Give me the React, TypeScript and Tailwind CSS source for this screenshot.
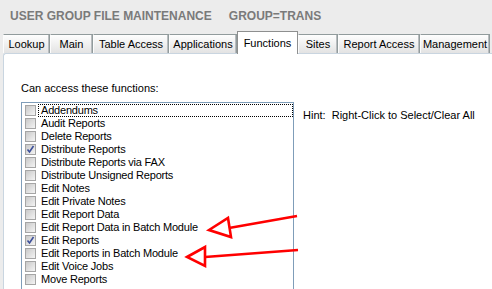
import React from "react";

const tabs = [
  { label: "Lookup", w: "w-[47px]" },
  { label: "Main", w: "w-[43px]" },
  { label: "Table Access", w: "w-[76px]" },
  { label: "Applications", w: "w-[68px]" },
  { label: "Functions", w: "w-[61px]", active: true },
  { label: "Sites", w: "w-[40px]" },
  { label: "Report Access", w: "w-[82px]" },
  { label: "Management", w: "w-[70px]" },
];

const functions = [
  { name: "Addendums", checked: false },
  { name: "Audit Reports", checked: false },
  { name: "Delete Reports", checked: false },
  { name: "Distribute Reports", checked: true },
  { name: "Distribute Reports via FAX", checked: false },
  { name: "Distribute Unsigned Reports", checked: false },
  { name: "Edit Notes", checked: false },
  { name: "Edit Private Notes", checked: false },
  { name: "Edit Report Data", checked: false },
  { name: "Edit Report Data in Batch Module", checked: false },
  { name: "Edit Reports", checked: true },
  { name: "Edit Reports in Batch Module", checked: false },
  { name: "Edit Voice Jobs", checked: false },
  { name: "Move Reports", checked: false },
];

function CheckBox({ checked }: { checked: boolean }) {
  return (
    <span className="relative flex h-[11px] w-[11px] shrink-0 items-center justify-center border border-[#a5a5a5] bg-gradient-to-br from-[#c9c9c9] to-[#f4f4f4]">
      {checked && (
        <svg width="9" height="9" viewBox="0 0 9 9" className="absolute">
          <path d="M1.5 4.5 L3.5 7 L7.5 1" fill="none" stroke="#3c4f9a" strokeWidth="1.6" />
        </svg>
      )}
    </span>
  );
}

export default function App() {
  return (
    <div className="relative h-[289px] w-[492px] overflow-hidden bg-[#ececec] font-['Liberation_Sans',Arial,sans-serif] text-[11px] text-black">
      <div className="flex h-[31px] items-center pl-[10px] pt-[1px] text-[12px] font-bold text-[#7a7a7a]">
        <span>USER GROUP FILE MAINTENANCE</span>
        <span className="ml-[17px]">GROUP=TRANS</span>
      </div>

      <div className="flex h-[22px] items-end pl-[3px]">
        {tabs.map((t) =>
          t.active ? (
            <div
              key={t.label}
              className={`${t.w} relative z-10 flex h-[23px] items-start justify-center border-x border-t border-[#8e8f8f] bg-white pt-[3px] -mb-[1px]`}
            >
              {t.label}
            </div>
          ) : (
            <div
              key={t.label}
              className={`${t.w} flex h-[19px] items-center justify-center border border-b-0 border-[#919b9c] border-l-[#fcfcfc] bg-gradient-to-b from-[#fefefe] to-[#e3e3e3] shadow-[inset_-1px_0_0_#b9bcbf]`}
            >
              {t.label}
            </div>
          )
        )}
      </div>

      <div className="ml-[3px] h-[236px] rounded-tl-[3px] border-l border-t border-[#c9d5e0] bg-white pl-[17px] pt-[26px]">
        <div className="h-[17px] leading-[17px]">Can access these functions:</div>
        <div className="mt-[5px] flex">
          <div className="flex h-[200px] w-[273px] flex-col border border-[#7f9db9] border-b-0 pl-[3px] pt-[1px] tracking-[-0.2px]">
            {functions.map((f, i) => (
              <div key={f.name} className="flex h-[13px] items-center">
                <CheckBox checked={f.checked} />
                <span
                  className={`ml-[2px] flex h-[13px] flex-1 items-center pl-[2px] leading-[13px] ${
                    i === 0 ? "border border-dotted border-black" : "border border-transparent"
                  }`}
                >
                  {f.name}
                </span>
              </div>
            ))}
          </div>
          <div className="ml-[9px] mt-[5px] whitespace-pre">Hint:  Right-Click to Select/Clear All</div>
        </div>
      </div>

      <svg
        className="pointer-events-none absolute left-0 top-0"
        width="492"
        height="289"
        viewBox="0 0 492 289"
      >
        <g fill="none" stroke="#ff0000" strokeWidth="2.6" strokeLinejoin="miter">
          <path d="M297 216 L229 228" />
          <path d="M209 230 L228 218 L231 237 Z" />
          <path d="M298 250 L205 257" />
          <path d="M187 257 L205 247 L205 266 Z" />
        </g>
      </svg>
    </div>
  );
}
